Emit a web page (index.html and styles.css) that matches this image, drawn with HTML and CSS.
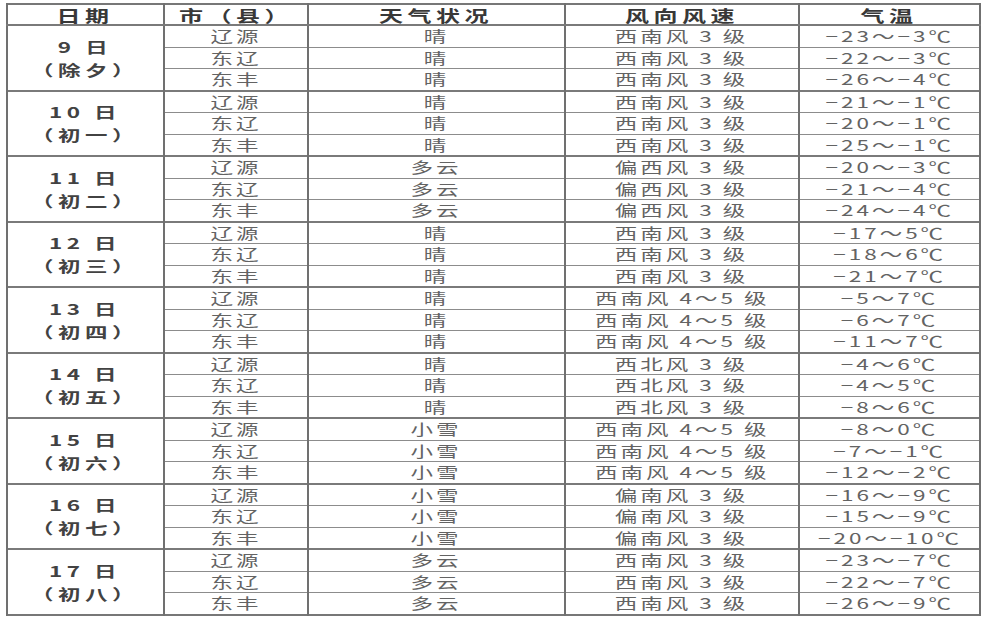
FILE: index.html
```html
<!DOCTYPE html>
<html lang="zh">
<head>
<meta charset="utf-8">
<title>天气预报</title>
<link rel="stylesheet" href="styles.css">
</head>
<body>
<table class="wx">
  <colgroup>
    <col class="c1"><col class="c2"><col class="c3"><col class="c4"><col class="c5">
  </colgroup>
  <thead>
    <tr class="head"><th><span class="s">日期</span></th><th><span class="s">市（县）</span></th><th><span class="s">天气状况</span></th><th><span class="s">风向风速</span></th><th><span class="s">气温</span></th></tr>
  </thead>
  <tbody>
    <tr class="g"><td rowspan="3" class="date"><span class="s">9 日<br>（除夕）</span></td><td><span class="s">辽源</span></td><td><span class="s">晴</span></td><td><span class="s">西南风 3 级</span></td><td><span class="s">−23～−3℃</span></td></tr>
    <tr><td><span class="s">东辽</span></td><td><span class="s">晴</span></td><td><span class="s">西南风 3 级</span></td><td><span class="s">−22～−3℃</span></td></tr>
    <tr><td><span class="s">东丰</span></td><td><span class="s">晴</span></td><td><span class="s">西南风 3 级</span></td><td><span class="s">−26～−4℃</span></td></tr>

    <tr class="g"><td rowspan="3" class="date"><span class="s">10 日<br>（初一）</span></td><td><span class="s">辽源</span></td><td><span class="s">晴</span></td><td><span class="s">西南风 3 级</span></td><td><span class="s">−21～−1℃</span></td></tr>
    <tr><td><span class="s">东辽</span></td><td><span class="s">晴</span></td><td><span class="s">西南风 3 级</span></td><td><span class="s">−20～−1℃</span></td></tr>
    <tr><td><span class="s">东丰</span></td><td><span class="s">晴</span></td><td><span class="s">西南风 3 级</span></td><td><span class="s">−25～−1℃</span></td></tr>

    <tr class="g"><td rowspan="3" class="date"><span class="s">11 日<br>（初二）</span></td><td><span class="s">辽源</span></td><td><span class="s">多云</span></td><td><span class="s">偏西风 3 级</span></td><td><span class="s">−20～−3℃</span></td></tr>
    <tr><td><span class="s">东辽</span></td><td><span class="s">多云</span></td><td><span class="s">偏西风 3 级</span></td><td><span class="s">−21～−4℃</span></td></tr>
    <tr><td><span class="s">东丰</span></td><td><span class="s">多云</span></td><td><span class="s">偏西风 3 级</span></td><td><span class="s">−24～−4℃</span></td></tr>

    <tr class="g"><td rowspan="3" class="date"><span class="s">12 日<br>（初三）</span></td><td><span class="s">辽源</span></td><td><span class="s">晴</span></td><td><span class="s">西南风 3 级</span></td><td><span class="s">−17～5℃</span></td></tr>
    <tr><td><span class="s">东辽</span></td><td><span class="s">晴</span></td><td><span class="s">西南风 3 级</span></td><td><span class="s">−18～6℃</span></td></tr>
    <tr><td><span class="s">东丰</span></td><td><span class="s">晴</span></td><td><span class="s">西南风 3 级</span></td><td><span class="s">−21～7℃</span></td></tr>

    <tr class="g"><td rowspan="3" class="date"><span class="s">13 日<br>（初四）</span></td><td><span class="s">辽源</span></td><td><span class="s">晴</span></td><td><span class="s">西南风 4～5 级</span></td><td><span class="s">−5～7℃</span></td></tr>
    <tr><td><span class="s">东辽</span></td><td><span class="s">晴</span></td><td><span class="s">西南风 4～5 级</span></td><td><span class="s">−6～7℃</span></td></tr>
    <tr><td><span class="s">东丰</span></td><td><span class="s">晴</span></td><td><span class="s">西南风 4～5 级</span></td><td><span class="s">−11～7℃</span></td></tr>

    <tr class="g"><td rowspan="3" class="date"><span class="s">14 日<br>（初五）</span></td><td><span class="s">辽源</span></td><td><span class="s">晴</span></td><td><span class="s">西北风 3 级</span></td><td><span class="s">−4～6℃</span></td></tr>
    <tr><td><span class="s">东辽</span></td><td><span class="s">晴</span></td><td><span class="s">西北风 3 级</span></td><td><span class="s">−4～5℃</span></td></tr>
    <tr><td><span class="s">东丰</span></td><td><span class="s">晴</span></td><td><span class="s">西北风 3 级</span></td><td><span class="s">−8～6℃</span></td></tr>

    <tr class="g"><td rowspan="3" class="date"><span class="s">15 日<br>（初六）</span></td><td><span class="s">辽源</span></td><td><span class="s">小雪</span></td><td><span class="s">西南风 4～5 级</span></td><td><span class="s">−8～0℃</span></td></tr>
    <tr><td><span class="s">东辽</span></td><td><span class="s">小雪</span></td><td><span class="s">西南风 4～5 级</span></td><td><span class="s">−7～−1℃</span></td></tr>
    <tr><td><span class="s">东丰</span></td><td><span class="s">小雪</span></td><td><span class="s">西南风 4～5 级</span></td><td><span class="s">−12～−2℃</span></td></tr>

    <tr class="g"><td rowspan="3" class="date"><span class="s">16 日<br>（初七）</span></td><td><span class="s">辽源</span></td><td><span class="s">小雪</span></td><td><span class="s">偏南风 3 级</span></td><td><span class="s">−16～−9℃</span></td></tr>
    <tr><td><span class="s">东辽</span></td><td><span class="s">小雪</span></td><td><span class="s">偏南风 3 级</span></td><td><span class="s">−15～−9℃</span></td></tr>
    <tr><td><span class="s">东丰</span></td><td><span class="s">小雪</span></td><td><span class="s">偏南风 3 级</span></td><td><span class="s">−20～−10℃</span></td></tr>

    <tr class="g"><td rowspan="3" class="date"><span class="s">17 日<br>（初八）</span></td><td><span class="s">辽源</span></td><td><span class="s">多云</span></td><td><span class="s">西南风 3 级</span></td><td><span class="s">−23～−7℃</span></td></tr>
    <tr><td><span class="s">东辽</span></td><td><span class="s">多云</span></td><td><span class="s">西南风 3 级</span></td><td><span class="s">−22～−7℃</span></td></tr>
    <tr><td><span class="s">东丰</span></td><td><span class="s">多云</span></td><td><span class="s">西南风 3 级</span></td><td><span class="s">−26～−9℃</span></td></tr>
  </tbody>
</table>
</body>
</html>
```

FILE: styles.css
```css
html, body {
  margin: 0;
  padding: 0;
  background: #ffffff;
}

body {
  padding: 3px 0 0 6px;
  font-family: "Noto Sans CJK SC", "Noto Sans", sans-serif;
  color: #636363;
}

.wx {
  border-collapse: collapse;
  table-layout: fixed;
  width: 973px;
  border: 2px solid #777;
}

.c1 { width: 157px; }
.c2 { width: 144px; }
.c3 { width: 257px; }
.c4 { width: 234px; }
.c5 { width: 181px; }

.wx th,
.wx td {
  padding: 0;
  text-align: center;
  vertical-align: middle;
  border-left: 2px solid #707070;
  border-right: 2px solid #707070;
  border-top: 1px solid #8c8c8c;
  border-bottom: 1px solid #8c8c8c;
  font-size: 15px;
  line-height: 18px;
  height: 20.5px;
  overflow: hidden;
  white-space: nowrap;
}

.wx tr.g td {
  border-top: 2px solid #7a7a7a;
}

.s {
  display: inline-block;
  transform: scaleX(1.5);
  letter-spacing: 2px;
}

.head th {
  height: 19px;
  font-size: 16px;
  font-weight: 700;
  color: #383838;
  border-bottom: 2px solid #7a7a7a;
}

.head th .s {
  letter-spacing: 3px;
}

.wx td.date {
  font-size: 15px;
  font-weight: 700;
  color: #424242;
  line-height: 23px;
}

.wx td.date .s {
  letter-spacing: 3px;
}
```
